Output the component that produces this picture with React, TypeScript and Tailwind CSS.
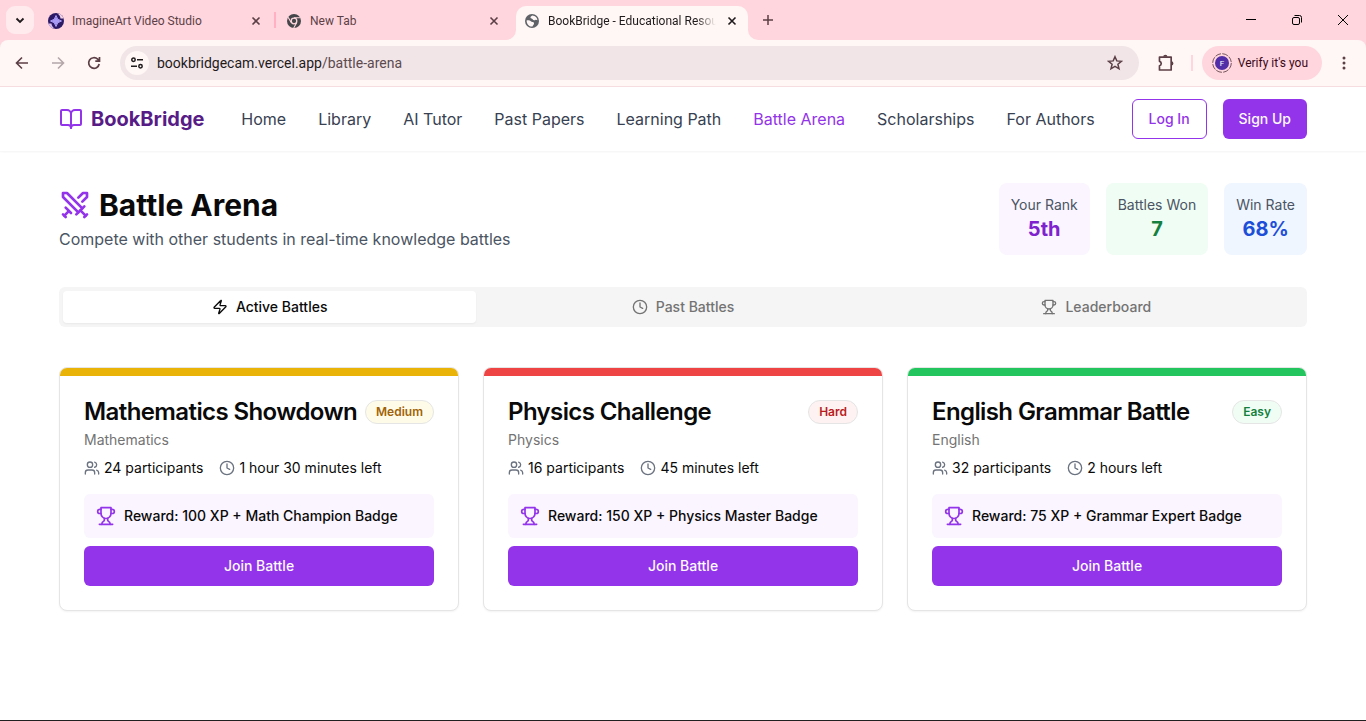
import { useState } from "react";
import type { ReactNode, SVGProps } from "react";
import { BookOpen, Clock, Swords, Users, Zap } from "lucide-react";
import clsx from "clsx";

const navLinks = [
	"Home",
	"Library",
	"AI Tutor",
	"Past Papers",
	"Learning Path",
	"Battle Arena",
	"Scholarships",
	"For Authors",
];

const stats = [
	{ label: "Your Rank", value: "5th", box: "bg-[#faf5ff]", text: "text-[#7e22ce]" },
	{ label: "Battles Won", value: "7", box: "bg-[#f0fdf4]", text: "text-[#15803d]" },
	{ label: "Win Rate", value: "68%", box: "bg-[#eff6ff]", text: "text-[#1d4ed8]" },
];

const battles = [
	{
		title: "Mathematics Showdown",
		subject: "Mathematics",
		level: "Medium",
		participants: 24,
		timeLeft: "1 hour 30 minutes left",
		reward: "100 XP + Math Champion Badge",
		bar: "bg-[#eab308]",
		badge: "bg-[#fefce8] text-[#a16207]",
	},
	{
		title: "Physics Challenge",
		subject: "Physics",
		level: "Hard",
		participants: 16,
		timeLeft: "45 minutes left",
		reward: "150 XP + Physics Master Badge",
		bar: "bg-[#ef4444]",
		badge: "bg-[#fef2f2] text-[#b91c1c]",
	},
	{
		title: "English Grammar Battle",
		subject: "English",
		level: "Easy",
		participants: 32,
		timeLeft: "2 hours left",
		reward: "75 XP + Grammar Expert Badge",
		bar: "bg-[#22c55e]",
		badge: "bg-[#f0fdf4] text-[#15803d]",
	},
];

function Trophy(props: SVGProps<SVGSVGElement>) {
	return (
		<svg
			viewBox="0 0 24 24"
			fill="none"
			stroke="currentColor"
			strokeWidth="2"
			strokeLinecap="round"
			strokeLinejoin="round"
			{...props}
		>
			<path d="M6 9H4.5a2.5 2.5 0 0 1 0-5H6" />
			<path d="M18 9h1.5a2.5 2.5 0 0 0 0-5H18" />
			<path d="M4 22h16" />
			<path d="M10 14.66V17c0 .55-.47.98-.97 1.21C7.85 18.75 7 20.24 7 22" />
			<path d="M14 14.66V17c0 .55.47.98.97 1.21C16.15 18.75 17 20.24 17 22" />
			<path d="M18 2H6v7a6 6 0 0 0 12 0V2Z" />
		</svg>
	);
}

// Small stroked glyph on a 16px grid, used by the browser bar
function Glyph({ children, className }: { children: ReactNode; className?: string }) {
	return (
		<svg
			viewBox="0 0 16 16"
			fill="none"
			stroke="currentColor"
			className={clsx("shrink-0", className ?? "size-4")}
		>
			{children}
		</svg>
	);
}

function StudioIcon() {
	return (
		<svg viewBox="0 0 16 16" className="size-4 shrink-0">
			<circle cx="8" cy="8" r="8" fill="#2d1a66" />
			<path d="M9 0.3A8 8 0 0 1 15.6 5.6L12.5 5.5C12.5 3.5 11 1.500 9 .3Z" fill="#f3d3e6" />
			<path d="M7 15.7A8 8 0 0 1 .4 10.4L3.500 10.500C3.500 12.500 5 14.500 7 15.700Z" fill="#d9bcf0" />
			<path d="M8 2.500Q8.800 7.200 13.500 8 8.800 8.800 8 13.500 7.200 8.800 2.500 8 7.200 7.200 8 2.500Z" fill="#a99bf5" stroke="#a99bf5" />
		</svg>
	);
}

function ChromeIcon() {
	return (
		<svg viewBox="0 0 16 16" className="size-4 shrink-0">
			<circle cx="8" cy="8" r="7" fill="#45464a" />
			<circle cx="8" cy="8" r="2.800" fill="#45464a" stroke="#ffd6de" strokeWidth="1.300" />
			<path
				d="M8 4.800H14.300M5.200 9.600 2.100 4.200M10.800 9.600 7.700 15"
				stroke="#ffd6de"
				strokeWidth="1.100"
			/>
		</svg>
	);
}

function GlobeIcon() {
	return (
		<svg viewBox="0 0 16 16" className="size-4 shrink-0">
			<circle cx="8" cy="8" r="7" fill="#5f6368" />
			<path
				d="M2.600 7.400C4.500 7.200 6.200 7.500 7.200 8.600 8.200 9.700 9.600 8.500 10 10 10.300 11.300 9 12 8.500 13.400 5.800 13.800 2.700 11.700 2.600 7.400Z"
				fill="#fff7f5"
			/>
			<path
				d="M8.200 2.500C7.500 3.300 6.200 3.600 6.500 4.800 6.800 5.800 8.200 5.200 8.600 6.200 9 7.300 10.400 7.600 11.300 6.900 12 6.500 12.800 6.900 13.400 7.300 13.300 5 11.500 2.700 8.200 2.500Z"
				fill="#fff7f5"
			/>
		</svg>
	);
}

type TabProps = { icon: ReactNode; title: string; active?: boolean };

function BrowserTab({ icon, title, active }: TabProps) {
	return (
		<div
			className={clsx(
				"relative flex h-[34px] w-[232px] items-center gap-2 px-2 pb-1",
				active ? "rounded-t-[10px] bg-[#fff7f5] text-[#1f1a1b]" : "text-[#5c3f46]",
			)}
		>
			{active && (
				<>
					<svg viewBox="0 0 10 10" className="absolute bottom-0 -left-[10px] size-[10px]">
						<path d="M10 0V10H0A10 10 0 0 0 10 0Z" fill="#fff7f5" />
					</svg>
					<svg viewBox="0 0 10 10" className="absolute -right-[10px] bottom-0 size-[10px]">
						<path d="M0 0V10H10A10 10 0 0 1 0 0Z" fill="#fff7f5" />
					</svg>
				</>
			)}
			{icon}
			<span
				className={clsx(
					"min-w-0 flex-1 overflow-hidden text-xs whitespace-nowrap",
					active && "[mask-image:linear-gradient(to_right,black_88%,transparent)]",
				)}
			>
				{title}
			</span>
			<button aria-label={`Close ${title}`}>
				<Glyph>
					<path d="M4.500 4.500 11.500 11.500M11.500 4.500 4.500 11.500" strokeWidth="1.600" />
				</Glyph>
			</button>
		</div>
	);
}

function BrowserBar() {
	return (
		<div className="bg-[#ffd6de] font-[Roboto,'Open_Sans',sans-serif] text-[#5c3f46]">
			<div className="flex h-10 items-end">
				<button
					aria-label="Search tabs"
					className="mr-[6px] mb-[6px] ml-[6px] flex size-7 items-center justify-center rounded-[9px] bg-[#ffebee] text-[#1f1a1b]"
				>
					<Glyph>
						<path d="M4.500 6.500 8 10 11.500 6.500" strokeWidth="1.800" />
					</Glyph>
				</button>
				<BrowserTab icon={<StudioIcon />} title="ImagineArt Video Studio" />
				<span className="mx-[2px] mb-3 h-4 w-[2px] bg-[#ffb1c1]" />
				<BrowserTab icon={<ChromeIcon />} title="New Tab" />
				<span className="w-[6px]" />
				<BrowserTab icon={<GlobeIcon />} title="BookBridge - Educational Resou" active />
				<button aria-label="New tab" className="mb-3 ml-3">
					<Glyph>
						<path d="M8 3V13M3 8H13" strokeWidth="1.500" />
					</Glyph>
				</button>
				<div className="ml-auto flex h-10 text-black">
					<button aria-label="Minimize" className="flex w-[46px] items-center justify-center">
						<Glyph>
							<path d="M3 7.500H13" />
						</Glyph>
					</button>
					<button aria-label="Restore" className="flex w-[46px] items-center justify-center">
						<Glyph>
							<rect x="3.500" y="5.500" width="7" height="7" rx="1.500" />
							<path d="M5.500 3.500H10.500A2 2 0 0 1 12.500 5.500V10.500" />
						</Glyph>
					</button>
					<button aria-label="Close window" className="flex w-[46px] items-center justify-center">
						<Glyph>
							<path d="M3 3 13 13M13 3 3 13" />
						</Glyph>
					</button>
				</div>
			</div>

			<div className="flex h-[47px] items-center rounded-t-lg border-b border-[#f5dde0] bg-[#fff7f5] px-[14px]">
				<div className="flex gap-5">
					<button aria-label="Back">
						<Glyph>
							<path d="M14 8H3M8 2.500 2.500 8 8 13.500" strokeWidth="1.600" />
						</Glyph>
					</button>
					<button aria-label="Forward" className="text-[#b5a6a9]">
						<Glyph>
							<path d="M2 8H13M8 2.500 13.500 8 8 13.500" strokeWidth="1.600" />
						</Glyph>
					</button>
					<button aria-label="Reload">
						<Glyph>
							<path
								d="M13.200 9A5.300 5.300 0 1 1 11.700 4.200L13.500 6M13.500 2V6.200H9.300"
								strokeWidth="1.700"
							/>
						</Glyph>
					</button>
				</div>
				<div className="ml-[18px] flex h-[34px] flex-1 items-center rounded-full bg-[#f1e5e8] pr-4 pl-[5px]">
					<button
						aria-label="Site information"
						className="flex size-6 items-center justify-center rounded-full bg-[#fff7f5] text-[#1f1a1b]"
					>
						<Glyph>
							<circle cx="4.500" cy="4.800" r="1.700" strokeWidth="1.500" />
							<circle cx="11.500" cy="11.200" r="1.700" strokeWidth="1.500" />
							<path d="M8 4.800H14M2 11.200H8" strokeWidth="1.500" />
						</Glyph>
					</button>
					<div className="ml-2 flex-1 text-sm text-[#1f1a1b]">
						bookbridgecam.vercel.app<span className="text-[#5c4a4e]">/battle-arena</span>
					</div>
					<button aria-label="Bookmark this page">
						<Glyph>
							<path
								d="M8 1.700 9.800 5.900 14.400 6.300 10.900 9.300 12 13.800 8 11.400 4 13.800 5.100 9.300 1.600 6.300 6.200 5.900Z"
								strokeWidth="1.500"
							/>
						</Glyph>
					</button>
				</div>
				<button aria-label="Extensions" className="ml-[18px]">
					<Glyph className="size-[18px]">
						<path
							d="M2.200 2.700H12.600V14.200H2.200V10.400A2 2 0 0 0 2.200 6.500Z"
							strokeWidth="1.500"
							strokeLinejoin="round"
						/>
						<path
							d="M5.500 2.500A1.900 1.900 0 0 1 9.300 2.500ZM12.700 6.500A1.900 1.900 0 0 1 12.700 10.300Z"
							fill="currentColor"
							stroke="none"
						/>
					</Glyph>
				</button>
				<span className="mr-[9px] ml-4 h-4 w-[2px] bg-[#ffd6de]" />
				<button className="flex h-[34px] items-center gap-[6px] rounded-full bg-[#ffd6de] pr-[14px] pl-[10px] text-xs text-[#3b0717]">
					<svg viewBox="0 0 20 20" className="size-5">
						<circle
							cx="10"
							cy="10"
							r="9.300"
							fill="none"
							stroke="#75565d"
							strokeDasharray="6 1.300"
						/>
						<circle cx="10" cy="10" r="7" fill="#512da8" />
						<text x="10" y="13" textAnchor="middle" fontSize="8" fill="#ffffff">
							F
						</text>
					</svg>
					Verify it's you
				</button>
				<button aria-label="Menu" className="ml-[14px]">
					<Glyph>
						<path
							d="M8 3V3.010M8 8V8.010M8 13V13.010"
							strokeWidth="3"
							strokeLinecap="round"
						/>
					</Glyph>
				</button>
			</div>
		</div>
	);
}

function SiteHeader() {
	return (
		<header className="bg-white shadow-xs">
			<div className="mx-auto flex h-16 max-w-[1280px] items-center justify-between px-4">
				<a href="#" className="flex items-center gap-2">
					<BookOpen className="size-6 text-[#9333ea]" />
					<span className="text-xl font-bold text-[#581c87]">BookBridge</span>
				</a>
				<nav className="flex items-center gap-8">
					{navLinks.map((link) => (
						<a
							key={link}
							href="#"
							className={link === "Battle Arena" ? "text-[#9333ea]" : "text-[#374151]"}
						>
							{link}
						</a>
					))}
				</nav>
				<div className="flex items-center gap-4">
					<button className="h-10 rounded-md border border-[#9333ea] px-4 text-sm font-medium text-[#9333ea]">
						Log In
					</button>
					<button className="h-10 rounded-md bg-[#9333ea] px-4 text-sm font-medium text-[#fafafa]">
						Sign Up
					</button>
				</div>
			</div>
		</header>
	);
}

function BattleCard({ battle }: { battle: (typeof battles)[number] }) {
	return (
		<article className="overflow-hidden rounded-lg border border-[#e5e5e5] bg-white shadow-xs">
			<div className={clsx("h-2", battle.bar)} />
			<div className="flex flex-col gap-[6px] p-6 pb-2">
				<div className="flex justify-between">
					<h3 className="text-2xl leading-none font-semibold tracking-tight">{battle.title}</h3>
					<span
						className={clsx(
							"inline-flex items-center rounded-full border border-[#e5e5e5] px-[10px] text-xs font-semibold",
							battle.badge,
						)}
					>
						{battle.level}
					</span>
				</div>
				<p className="text-sm text-[#737373]">{battle.subject}</p>
			</div>
			<div className="px-6 pb-6">
				<div className="mb-4 flex gap-4 text-sm">
					<span className="flex items-center gap-1">
						<Users className="size-4 text-[#6b7280]" />
						{battle.participants} participants
					</span>
					<span className="flex items-center gap-1">
						<Clock className="size-4 text-[#6b7280]" />
						{battle.timeLeft}
					</span>
				</div>
				<div className="mb-2 flex items-center gap-2 rounded-md bg-[#faf5ff] p-3 text-sm font-medium">
					<Trophy className="size-5 text-[#9333ea]" />
					<span>Reward: {battle.reward}</span>
				</div>
				<button className="h-10 w-full rounded-md bg-[#9333ea] text-sm font-medium text-[#fafafa]">
					Join Battle
				</button>
			</div>
		</article>
	);
}

const tabs = [
	{ id: "active", label: "Active Battles", Icon: Zap },
	{ id: "past", label: "Past Battles", Icon: Clock },
	{ id: "leaderboard", label: "Leaderboard", Icon: Trophy },
];

export default function App() {
	const [tab, setTab] = useState("active");

	return (
		<div className="flex min-h-screen flex-col border-b border-[#202020] bg-white font-['Inter',sans-serif] text-[#0a0a0a]">
			<BrowserBar />
			<SiteHeader />

			<main className="mx-auto w-full max-w-[1280px] flex-1 px-4 py-8">
				<div className="mb-8 flex items-center justify-between">
					<div>
						<h1 className="flex items-center gap-2 text-3xl font-bold">
							<Swords className="size-8 text-[#9333ea]" />
							Battle Arena
						</h1>
						<p className="mt-1 text-[#4b5563]">
							Compete with other students in real-time knowledge battles
						</p>
					</div>
					<div className="flex gap-4">
						{stats.map((stat) => (
							<div key={stat.label} className={clsx("rounded-lg p-3 text-center", stat.box)}>
								<p className="text-sm text-[#4b5563]">{stat.label}</p>
								<p className={clsx("text-xl font-bold", stat.text)}>{stat.value}</p>
							</div>
						))}
					</div>
				</div>

				<div role="tablist" className="mb-10 grid h-10 grid-cols-3 rounded-md bg-[#f5f5f5] p-1">
					{tabs.map(({ id, label, Icon }) => (
						<button
							key={id}
							role="tab"
							aria-selected={tab === id}
							onClick={() => setTab(id)}
							className={clsx(
								"flex items-center justify-center gap-2 rounded-sm text-sm font-medium",
								tab === id ? "bg-white text-[#0a0a0a] shadow-xs" : "text-[#737373]",
							)}
						>
							<Icon className="size-4" />
							{label}
						</button>
					))}
				</div>

				<div className="grid grid-cols-3 gap-6">
					{battles.map((battle) => (
						<BattleCard key={battle.title} battle={battle} />
					))}
				</div>
			</main>
		</div>
	);
}
